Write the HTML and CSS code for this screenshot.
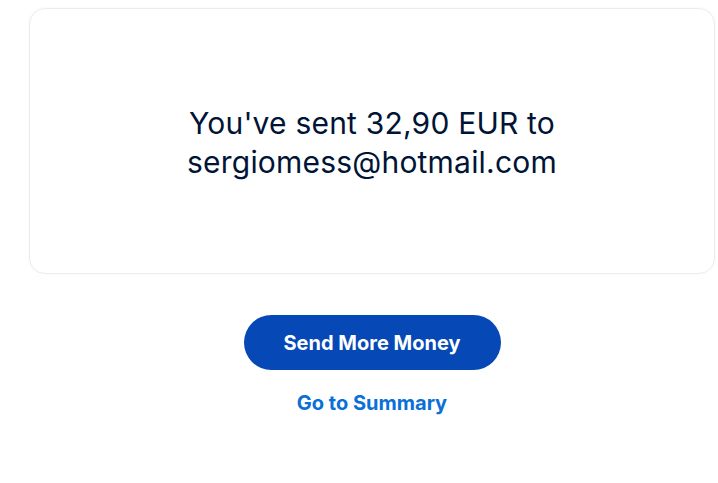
FILE: index.html
```html
<!DOCTYPE html>
<html>
<head>
<meta charset="utf-8">
<link rel="stylesheet" href="styles.css">
</head>
<body>
<main class="page">
  <section class="card">
    <p class="message">You've sent 32,90 EUR to<br>sergiomess@hotmail.com</p>
  </section>
  <div class="actions">
    <button class="btn-primary">Send More Money</button>
    <a class="link" href="#">Go to Summary</a>
  </div>
</main>
</body>
</html>
```
FILE: styles.css
```css
html, body {
  margin: 0;
  padding: 0;
  background: #ffffff;
}
body {
  font-family: Inter, "Noto Sans", sans-serif;
  color: #001435;
}
.page {
  padding: 8px 3px 0 29px;
}
.card {
  box-sizing: border-box;
  height: 266px;
  border: 1px solid #ececec;
  border-radius: 16px;
  box-shadow: 0 0 3px rgba(0,0,0,0.04);
  display: flex;
  align-items: center;
  justify-content: center;
}
.message {
  margin: 4px 0 0;
  text-align: center;
  font-size: 30px;
  line-height: 39px;
  font-weight: 400;
  letter-spacing: 0.2px;
  color: #001435;
}
.actions {
  display: flex;
  flex-direction: column;
  align-items: center;
  padding-top: 41px;
}
.btn-primary {
  width: 257px;
  height: 55px;
  border: none;
  border-radius: 28px;
  background: #0548b6;
  color: #ffffff;
  font-family: Inter, "Noto Sans", sans-serif;
  font-weight: 700;
  font-size: 20px;
}
.link {
  margin-top: 21px;
  font-weight: 700;
  font-size: 20px;
  line-height: 24px;
  color: #0a6fd6;
  text-decoration: none;
}
```
